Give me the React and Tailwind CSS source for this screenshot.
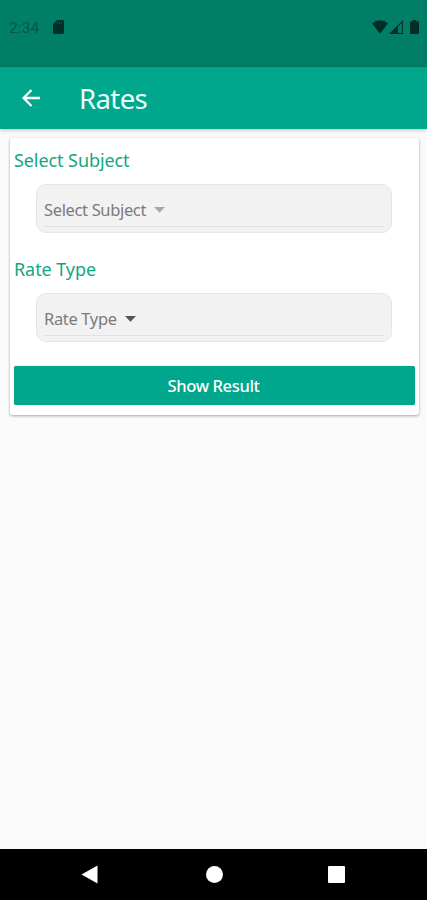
function StatusBar() {
  return (
    <div className="h-[67px] shrink-0 bg-[#007e67] flex items-start pt-[18px] pl-[9px] pr-[8px] text-[#012f28]">
      <span className="w-[31px] text-[15.5px] leading-[20px] tracking-[0.1px] text-[#005848] font-['Roboto',sans-serif]">
        2:34
      </span>
      <svg className="w-[11px] h-[14px] ml-[13px] mt-[2px]" viewBox="0 0 11 14" fill="currentColor">
        <path d="M4.3 0H9.6Q11 0 11 1.4V12.6Q11 14 9.6 14H1.4Q0 14 0 12.6V4.3Z" />
        <path d="M4.4 2V4.2M6.5 2V4.2M8.6 2V4.2" stroke="#007e67" strokeWidth="1" opacity="0.5" />
      </svg>
      <div className="ml-auto mt-[2px] flex items-start">
        <svg className="w-[16px] h-[14px]" viewBox="0 0 16 14" fill="currentColor">
          <path d="M0 3.2Q8-2.6 16 3.2L8 13.7Z" />
        </svg>
        <svg className="w-[14px] h-[14px] ml-[1px]" viewBox="0 0 14 14" fill="currentColor">
          <path fillRule="evenodd" d="M14 0V14H0ZM12.9 2.9L9 6.8V12.9H12.9Z" />
        </svg>
        <svg className="w-[9px] h-[14px] ml-[7px]" viewBox="0 0 9 14" fill="currentColor">
          <path d="M2.7 0H6.3V1.4H8Q9 1.4 9 2.4V13Q9 14 8 14H1Q0 14 0 13V2.4Q0 1.4 1 1.4H2.7Z" />
        </svg>
      </div>
    </div>
  );
}

function SelectField({ label, arrowClass }) {
  return (
    <div>
      <h2 className="text-[18px] leading-[24px] tracking-[-0.08px] text-[#14a582]">{label}</h2>
      <button className="ml-[22px] mt-[12px] w-[356px] h-[49px] px-[7px] rounded-[10px] border border-[#e6e6e6] bg-[#f2f2f2] flex">
        <span className="w-full h-[42px] pt-[8px] border-b border-[#e2e2e2] flex items-center">
          <span className="text-[16.5px] leading-[22px] tracking-[-0.35px] text-[#7b7b7b]">{label}</span>
          <svg className={`w-[11px] h-[6px] ml-[8px] ${arrowClass}`} viewBox="0 0 11 6" fill="currentColor">
            <path d="M0 0H11L5.5 5.7Z" />
          </svg>
        </span>
      </button>
    </div>
  );
}

function NavBar() {
  return (
    <div className="h-[51px] shrink-0 bg-black flex items-center justify-between pl-[81px] pr-[82px]">
      <svg className="w-[17px] h-[19px]" viewBox="0 0 17 19" fill="white">
        <path d="M16.5 0.5V18.5L0.5 9.5Z" />
      </svg>
      <div className="w-[17px] h-[17px] ml-[2px] rounded-full bg-white" />
      <div className="w-[17px] h-[17px] rounded-[1px] bg-white" />
    </div>
  );
}

function App() {
  return (
    <div className="w-full h-screen flex flex-col bg-[#fafafa] font-['Noto_Sans',sans-serif]">
      <StatusBar />

      {/* App Bar */}
      <header className="h-[62px] shrink-0 bg-[#00a78d] flex items-center pl-[22px] shadow-[0_1px_4px_rgba(0,0,0,0.25)]">
        <svg
          className="w-[18px] h-[18px]"
          viewBox="0 0 18 18"
          fill="none"
          stroke="white"
          strokeWidth="2.3"
        >
          <path d="M18 9H1.7M9.5 1L1.6 9L9.5 17" />
        </svg>
        <h1 className="ml-[39px] mt-[2px] text-[27.5px] leading-[36px] tracking-[-0.6px] text-[#e9fffa]">Rates</h1>
      </header>

      <main className="flex-1 pt-[9px] pl-[10px] pr-[8px]">
        <div className="h-[277px] rounded-[3px] bg-white pt-[10px] px-[4px] shadow-[0_1px_3px_rgba(0,0,0,0.35)]">
          <SelectField label="Select Subject" arrowClass="text-[#a8a8a8]" />
          <div className="mt-[24px]">
            <SelectField label="Rate Type" arrowClass="text-[#555555]" />
          </div>
          <button className="mt-[24px] w-full h-[39px] pt-[2px] pr-[2px] rounded-[2px] bg-[#00a78d] text-white text-[16.5px] font-medium tracking-[-0.35px] shadow-[0_0_1px_rgba(0,0,0,0.4)]">
            Show Result
          </button>
        </div>
      </main>

      <NavBar />
    </div>
  );
}

export default App;
